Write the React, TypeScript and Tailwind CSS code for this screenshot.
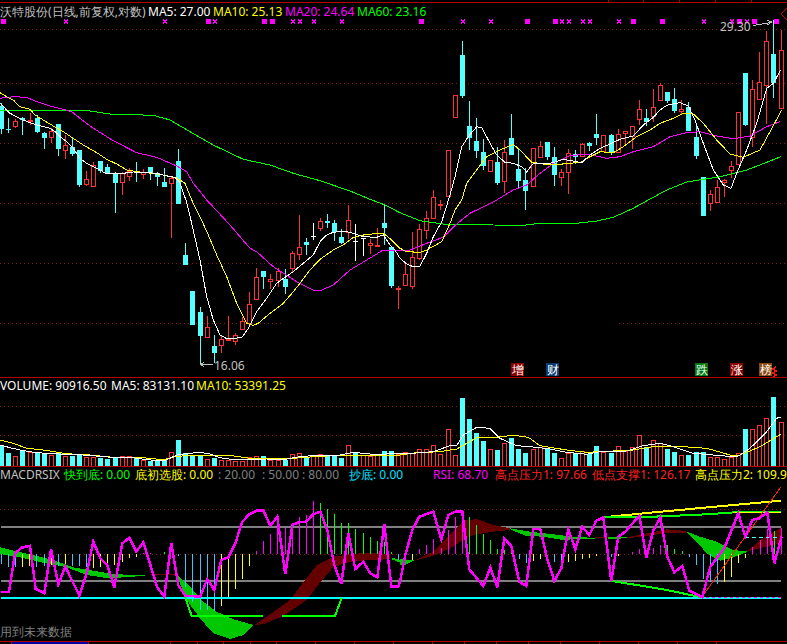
const CY = "#54ffff";
const RD = "#ff3232";
const z = (ox: number, oy: number, s: string) =>
  s
    .trim()
    .split(/\s+/)
    .map((p) => {
      const [a, b] = p.split(",").map(Number);
      return `${(ox + a / 3).toFixed(1)},${(oy + b / 3).toFixed(1)}`;
    })
    .join(" ");
const xs = (i: number) => Math.floor(1.7 + 7.085 * i);

type C = [string, number, number, number, number];
const blockA: C[] = [
  ["c", 310, 318, 386, 402], ["c", 355, 386, 388, 400], ["r", 358, 364, 380, 386], ["c", 350, 354, 360, 404],
  ["r", 340, 360, 366, 376], ["c", 345, 354, 396, 400], ["c", 395, 400, 414, 446], ["r", 385, 394, 414, 431],
  ["c", 372, 372, 446, 468], ["r", 405, 436, 452, 476], ["c", 415, 440, 462, 470], ["c", 450, 450, 555, 560],
  ["r", 514, 538, 556, 558], ["r", 486, 496, 560, 560], ["c", 483, 483, 512, 520], ["c", 492, 500, 520, 520],
  ["c", 516, 520, 548, 638], ["r", 516, 518, 550, 585], ["r", 505, 512, 530, 545], ["c", 487, 514, 518, 548],
  ["r", 506, 515, 524, 537], ["c", 500, 502, 520, 540], ["c", 517, 520, 530, 558], ["c", 505, 546, 560, 560],
  ["r", 530, 534, 551, 713], ["c", 447, 483, 612, 612],
];
const blockB: C[] = [
  ["c", 130, 165, 195, 195], ["c", 273, 273, 375, 375], ["c", 322, 336, 408, 497], ["r", 348, 382, 414, 415],
  ["c", 405, 438, 460, 490], ["r", 405, 418, 437, 458], ["r", 348, 416, 418, 418], ["r", 398, 404, 425, 435],
  ["r", 350, 364, 390, 390], ["r", 277, 313, 372, 375], ["r", 205, 232, 300, 302], ["c", 213, 213, 231, 267],
  ["r", 222, 238, 245, 267], ["r", 205, 213, 242, 262], ["c", 208, 238, 262, 282], ["r", 153, 160, 208, 220],
  ["r", 45, 142, 166, 180], ["c", 113, 126, 134, 165], ["w", 70, 108, 108, 122], ["r", 55, 64, 86, 95],
  ["c", 42, 64, 68, 85], ["c", 60, 70, 96, 122], ["c", 88, 111, 130, 132], ["r", 15, 60, 98, 118],
  ["w", 72, 124, 124, 183], ["w", 115, 115, 115, 168], ["r", 118, 130, 139, 162], ["r", 85, 136, 138, 143],
  ["c", 15, 69, 84, 135], ["c", 138, 140, 258, 263], ["r", 258, 264, 268, 327],
].map((r) => [r[0], r[1] + 600, r[2] + 600, r[3] + 600, r[4] + 600] as C);
const blockC: C[] = [
  ["r", 790, 822, 857, 857], ["r", 696, 772, 862, 867], ["r", 672, 688, 778, 780], ["r", 633, 655, 692, 718],
  ["r", 570, 590, 658, 658], ["r", 600, 612, 616, 630], ["r", 450, 450, 590, 590], ["r", 285, 285, 353, 353],
  ["c", 123, 165, 288, 295], ["c", 303, 378, 414, 450], ["c", 354, 423, 453, 473], ["c", 418, 456, 498, 510],
  ["r", 480, 481, 515, 516], ["c", 440, 486, 550, 555], ["r", 420, 456, 545, 578], ["c", 342, 414, 465, 465],
  ["c", 445, 507, 542, 565], ["c", 503, 540, 572, 630], ["r", 445, 445, 560, 560], ["r", 423, 439, 473, 474],
  ["c", 426, 426, 470, 480], ["c", 442, 471, 524, 560], ["r", 507, 516, 533, 557], ["r", 447, 460, 520, 581],
  ["c", 449, 462, 470, 490], ["r", 430, 433, 470, 473], ["c", 427, 430, 437, 453], ["c", 342, 403, 413, 435],
  ["r", 406, 406, 456, 458], ["c", 403, 405, 458, 465], ["r", 388, 403, 460, 461], ["r", 394, 394, 403, 440],
  ["r", 378, 379, 412, 446], ["r", 300, 328, 361, 376], ["c", 327, 354, 365, 378], ["r", 267, 322, 352, 366],
  ["r", 250, 256, 302, 303], ["c", 276, 276, 303, 310], ["c", 264, 297, 332, 338], ["r", 300, 328, 335, 346],
  ["c", 306, 322, 392, 392], ["c", 372, 411, 467, 476], ["c", 531, 531, 647, 647], ["r", 570, 583, 612, 633],
  ["r", 540, 561, 608, 608], ["r", 537, 541, 549, 590], ["r", 483, 499, 513, 535], ["r", 337, 337, 495, 495],
  ["c", 219, 219, 376, 378], ["r", 240, 268, 413, 440], ["r", 155, 247, 300, 300], ["r", 93, 124, 258, 372],
  ["c", 60, 162, 250, 295], ["r", 90, 151, 326, 326],
];
const candles = [...blockA, ...blockB, ...blockC];

const ma5 =
  z(0, 0, "0,310 15,325 30,340 50,350 70,360 90,368 110,375 130,380 150,385 165,395 180,410 200,425 220,445 240,475 260,490 285,503 300,510 320,522 345,521 370,520 400,516 440,518 470,520 500,528 525,532 540,548 550,580 558,600") + " " +
  z(0, 200, "575,70 600,180 620,290 640,360 660,405 680,416 700,415 725,413 745,385 770,335 800,295 830,250 855,232 880,215 910,190 940,165 960,125 980,105 1000,97 1030,93 1060,100 1090,110 1130,112 1150,105 1170,135 1185,150 1200,175") + " " +
  z(400, 200, "20,192 40,200 60,198 80,160 100,110 125,65") + " " +
  z(400, 0, "150,585 165,530 185,440 205,410 230,380 245,383 265,420 290,465 315,487 340,490 365,500 380,516 400,490 430,492 460,488 490,478 520,483 545,488 570,465 600,445 630,432 660,418 700,408 730,375 760,352 780,330 800,316 840,308 865,318 885,360 910,430 940,510 970,555 993,565 1010,520 1040,450 1070,370 1100,265 1120,250 1142,210");
const ma10 =
  z(0, 0, "0,278 20,290 40,300 60,320 90,328 105,345 130,360 160,378 190,395 220,415 250,435 290,458 320,478 350,492 380,510 410,515 440,518 470,522 500,527 530,534 555,550 575,600") + " " +
  z(0, 200, "600,50 625,105 650,165 680,230 710,310 740,370 760,376 775,370 810,340 850,310 880,275 900,250 930,210 960,178 1000,150 1030,135 1060,112 1100,103 1150,100 1175,120 1200,145") + " " +
  z(400, 200, "20,155 60,157 80,150 125,125 150,70 165,30") + " " +
  z(400, 0, "185,600 200,550 230,510 260,470 300,450 340,433 360,450 395,487 430,492 470,495 500,490 540,488 570,470 600,455 640,458 670,440 710,410 750,390 780,370 820,355 850,340 880,342 910,370 950,420 990,462 1030,472 1080,450 1110,395 1145,330");
const ma20 =
  z(0, 0, "0,295 40,290 80,292 110,305 150,318 190,328 215,335 240,355 280,385 340,422 410,458 470,472 530,498 560,515 580,550 620,600") + " " +
  z(0, 200, "690,75 750,145 770,155 820,200 890,245 940,270 965,270 1000,255 1050,210 1100,180 1150,150 1200,150") + " " +
  z(400, 200, "30,150 80,130 130,112 170,72 210,40 250,20") + " " +
  z(400, 0, "290,600 340,570 380,555 420,520 460,490 510,467 560,462 620,475 660,470 700,455 760,440 810,410 860,398 900,395 950,408 1000,416 1050,408 1100,380 1140,365");
const ma60 =
  z(0, 0, "0,330 250,330 330,342 460,346 510,360 570,395 640,435 730,478 810,495 880,520 960,542 1050,573 1115,600") + " " +
  z(0, 200, "1150,13 1200,38") + " " +
  z(400, 200, "60,62 130,72 170,72 280,75 370,76 420,70 530,70 590,63 640,52 700,25") + " " +
  z(400, 0, "745,600 800,570 860,546 960,530 1040,510 1100,487 1142,470");

const marks: [number, boolean][] = [
  [3, true], [66, false], [165, false], [208, true], [215, false], [264, true], [272, true], [293, false], [300, false], [314, false], [342, false],
  [421, true], [463, false], [491, false], [527, true], [555, true], [562, false], [569, false], [583, false], [590, false], [619, false], [633, true], [662, true], [704, false], [732, false], [739, true], [747, false], [754, true], [776, true],
];

const volTops: [string, number][] = [
  ["c", 210], ["c", 233], ["r", 243], ["c", 226], ["r", 232], ["c", 232], ["c", 235], ["r", 240], ["c", 233], ["r", 243], ["c", 243], ["c", 240], ["r", 246], ["r", 245], ["c", 250], ["c", 252], ["c", 246], ["r", 244], ["r", 244], ["c", 248], ["r", 256], ["c", 258], ["c", 254], ["c", 256], ["r", 232], ["c", 195], ["c", 235], ["c", 240], ["c", 244], ["r", 252], ["c", 250], ["r", 254], ["r", 254], ["r", 258], ["r", 258], ["r", 247], ["r", 244], ["c", 243], ["r", 254], ["r", 254], ["c", 255], ["r", 238], ["r", 235], ["c", 247], ["r", 244], ["r", 238], ["c", 243], ["c", 243], ["c", 248], ["r", 210], ["c", 232], ["r", 240], ["r", 243], ["r", 240], ["c", 228], ["c", 228], ["r", 238],
  ["r", 232], ["r", 234], ["r", 222], ["r", 222], ["r", 211], ["r", 238], ["r", 162], ["r", 240], ["c", 68], ["c", 132], ["c", 175], ["c", 198], ["r", 222], ["c", 225], ["r", 205], ["c", 188], ["c", 222], ["c", 234], ["r", 222], ["r", 215], ["c", 222], ["c", 234], ["r", 250], ["r", 234], ["c", 235], ["r", 228], ["c", 238], ["c", 213], ["r", 232], ["c", 233], ["r", 214], ["r", 228], ["r", 216], ["r", 181], ["c", 215], ["r", 196], ["r", 204], ["c", 222], ["c", 231], ["r", 240], ["c", 240], ["c", 232], ["c", 230], ["r", 246], ["r", 246], ["r", 252], ["r", 245], ["r", 235], ["c", 162], ["r", 162], ["r", 150], ["r", 130], ["c", 66], ["r", 140],
];
const volW =
  z(0, 375, "0,210 30,218 60,225 100,232 150,236 200,238 250,240 300,244 350,248 400,248 440,254 490,258 510,250 530,240 560,236 600,232 630,237 660,248 700,254 750,254 800,252 860,252 900,245 960,240 1010,242 1060,232 1120,238 1200,236") + " " +
  z(400, 375, "50,234 100,230 150,212 170,212 190,180 230,157 270,160 300,190 350,212 400,216 450,222 500,232 560,238 600,230 680,228 730,212 780,205 820,215 880,235 940,240 1010,246 1050,220 1100,170 1130,130 1142,126");
const volY =
  z(0, 375, "0,195 40,205 80,220 130,225 200,236 270,240 350,248 430,248 490,254 530,244 600,240 680,240 750,250 850,252 960,244 1050,240 1120,240 1200,240") + " " +
  z(400, 375, "50,233 120,230 170,222 230,188 290,187 340,181 385,187 420,212 500,225 560,232 640,228 700,225 760,215 850,215 920,220 990,240 1020,240 1080,215 1142,178");

const G = "#00c800";
const D = "#640000";
const ribbons: [string, number, string][] = [
  [G, 0, "0,202 40,212 100,225 160,240 220,262 280,272 340,282 400,285 450,285 380,292 320,294 260,285 200,262 130,248 60,232 0,222"],
  [D, 0, "450,281 530,281 530,285 450,285"],
  [G, 0, "530,283 570,320 610,365 650,395 700,418 760,435 760,437 730,465 690,477 640,460 600,415 560,360 530,285"],
  [D, 0, "760,437 800,410 870,360 915,300 950,255 1000,230 1060,222 1100,218 1170,222 1170,238 1100,240 1040,248 1000,262 950,320 920,360 850,408 790,432"],
  [G, 0, "1175,232 1200,240 1200,248 1175,238"],
  [G, 400, "0,238 45,240 15,255 0,255"],
  [D, 400, "40,243 100,215 150,165 190,122 230,117 280,135 330,145 330,150 280,155 220,165 190,180 150,205 100,228"],
  [G, 400, "330,145 390,155 460,163 520,170 585,174 585,176 520,178 490,180 430,170 380,168 330,148"],
  [D, 400, "585,171 625,171 625,175 585,175"],
  [G, 400, "625,172 680,172 680,175 625,177"],
  [D, 400, "680,172 740,160 800,148 850,152 860,155 860,158 800,158 740,168 680,175"],
  [G, 400, "860,155 900,170 950,185 1000,210 1045,215 1000,232 960,242 920,220 890,185 860,158"],
  [D, 400, "1040,215 1080,180 1145,142 1145,190 1080,205"],
];

const B = "#40c4ff";
const Y = "#ffff00";
const M = "#ff00ff";
const E = "#00ff00";
const hist: [number, number, number, string][] = [
  [0, 4, 253, B], [0, 25, 262, B], [0, 46, 262, B], [0, 67, 262, Y], [0, 88, 258, Y], [0, 109, 262, B], [0, 133, 258, B], [0, 154, 255, Y], [0, 175, 258, B], [0, 196, 258, Y], [0, 217, 258, B], [0, 238, 258, B], [0, 259, 260, B], [0, 280, 265, Y], [0, 301, 262, Y], [0, 322, 250, Y], [0, 343, 255, Y], [0, 367, 245, Y], [0, 388, 235, Y], [0, 409, 230, Y],
  [0, 430, 218, M], [0, 451, 218, M], [0, 493, 217, E], [0, 535, 228, B], [0, 556, 320, B], [0, 578, 365, B], [0, 601, 390, B], [0, 622, 390, B], [0, 643, 392, B], [0, 664, 378, Y], [0, 685, 355, Y], [0, 706, 327, Y], [0, 727, 297, Y], [0, 748, 258, Y],
  [0, 769, 212, M], [0, 790, 182, M], [0, 811, 162, M], [0, 832, 130, M], [0, 856, 145, M], [0, 877, 128, M], [0, 898, 110, M], [0, 919, 105, M], [0, 940, 62, M], [0, 961, 70, E], [0, 982, 87, E], [0, 1003, 102, E], [0, 1024, 128, E], [0, 1045, 130, E], [0, 1066, 148, E], [0, 1090, 160, E], [0, 1111, 170, E], [0, 1132, 182, E], [0, 1153, 187, E], [0, 1174, 215, E], [0, 1195, 240, B],
  [400, 37, 240, Y], [400, 58, 207, M], [400, 79, 195, M], [400, 100, 177, M], [400, 124, 203, M], [400, 145, 150, M], [400, 166, 112, M], [400, 187, 130, M], [400, 208, 112, E], [400, 229, 135, E], [400, 250, 162, E], [400, 271, 180, E], [400, 292, 207, E], [400, 313, 210, E], [400, 334, 218, E], [400, 358, 237, B], [400, 379, 250, B], [400, 400, 243, Y], [400, 421, 237, Y], [400, 463, 245, B], [400, 484, 250, B], [400, 505, 245, Y], [400, 526, 242, Y], [400, 547, 238, Y], [400, 568, 234, Y], [400, 589, 228, Y], [400, 634, 232, B], [400, 655, 228, Y], [400, 697, 215, M], [400, 718, 207, M], [400, 739, 210, M], [400, 760, 205, M], [400, 781, 195, M], [400, 802, 195, E], [400, 823, 207, E], [400, 847, 213, E], [400, 868, 232, B], [400, 889, 255, B], [400, 910, 297, B], [400, 931, 307, B], [400, 952, 312, B], [400, 973, 305, Y], [400, 994, 290, Y], [400, 1015, 250, Y], [400, 1036, 233, Y], [400, 1057, 202, M], [400, 1081, 180, M], [400, 1102, 148, M], [400, 1123, 153, E], [400, 1144, 145, M],
];

const rsi =
  z(0, 480, "3,336 27,336 45,220 65,203 90,197 107,327 133,340 153,208 175,313 196,260 238,346 259,285 280,185 301,235 322,255 343,322 367,190 388,173 409,215 430,187 472,322 493,350 514,190 535,315 556,347 601,350 622,297 643,330 664,240 685,232 706,190 727,125 748,103 769,92 790,91 811,137 832,110 856,283 877,135 898,126 919,125 940,103 961,95 982,150 1003,255 1024,312 1045,160 1066,267 1090,245 1111,280 1132,292 1153,133 1174,320 1195,320") + " " +
  z(400, 480, "0,305 16,225 37,150 58,110 100,95 124,178 145,105 166,95 187,95 208,268 250,318 271,262 292,322 313,175 334,198 358,305 379,318 400,147 421,147 442,238 463,303 484,265 505,148 526,208 547,140 568,165 589,122 610,112 634,303 655,170 676,155 718,107 739,232 760,152 781,112 802,230 823,277 847,258 868,332 907,352 931,260 973,205 1015,100 1036,170 1057,120 1078,115 1102,97 1123,250 1145,170");

const dots = (y: number, x1 = 0, x2 = 787) => (
  <line key={`${y}-${x1}`} x1={x1} x2={x2} y1={y + 0.5} y2={y + 0.5} stroke="#8a1a1a" strokeDasharray="1 3" />
);

const Panel = ({ top, h, children }: { top: number; h: number; children: React.ReactNode }) => (
  <svg
    className="absolute left-0 top-0"
    width={787}
    height={h}
    viewBox={`0 ${top} 787 ${h}`}
    shapeRendering="crispEdges"
  >
    {children}
  </svg>
);

const Line = ({ pts, c, w = 1 }: { pts: string; c: string; w?: number }) => (
  <polyline points={pts} fill="none" stroke={c} strokeWidth={w} />
);

const Badge = ({ t, x, cls }: { t: string; x: string; cls: string }) => (
  <div className={`absolute top-[360px] ${x} ${cls} flex h-[13px] w-[13px] items-center justify-center text-[12px] leading-none text-white`}>
    {t}
  </div>
);

export default function App() {
  return (
    <div className="relative flex h-[644px] w-[787px] flex-col overflow-hidden bg-black text-[12px] font-['Liberation_Sans','Noto_Sans_CJK_SC',sans-serif]">
      {/* top ticks */}
      <div className="relative h-[2px] shrink-0">
        <svg className="absolute inset-0" width={787} height={2} shapeRendering="crispEdges">
          {[608, 643, 679, 715, 751].map((x) => (
            <rect key={x} x={x} y={0} width={1} height={2} fill="#b40000" />
          ))}
        </svg>
      </div>

      {/* main chart */}
      <div className="relative h-[376px] shrink-0 border-y border-[#b40000]">
        <Panel top={3} h={374}>
          {[29, 83, 143, 203, 263].map((y) => dots(y))}
          {dots(323, 0, 284)}
          {dots(323, 619, 785)}
          {candles.map(([k, wt, bt, bb, wb], i) => {
            const c = xs(i);
            const col = k === "c" ? CY : k === "r" ? RD : "#ffffff";
            const top = Math.round(bt / 3);
            const bot = Math.round(bb / 3);
            return (
              <g key={i}>
                <rect x={c} y={Math.round(wt / 3)} width={1} height={Math.max(1, Math.round((wb - wt) / 3))} fill={col} />
                {k === "c" && <rect x={c - 2} y={top} width={5} height={Math.max(1, bot - top)} fill={col} />}
                {k === "r" && (
                  <rect x={c - 1.5} y={top + 0.5} width={4} height={Math.max(1, bot - top - 1)} fill="#000" stroke={col} />
                )}
                {k === "w" && <rect x={c - 2} y={top} width={5} height={1} fill={col} />}
              </g>
            );
          })}
          <Line pts={ma60} c="#00ff00" />
          <Line pts={ma20} c="#ff00ff" />
          <Line pts={ma10} c="#ffff00" />
          <Line pts={ma5} c="#ffffff" />
          {marks.map(([x, f]) => (
            <g key={x} stroke="#ff00ff">
              <path d={`M${x - 2} 19.5 L${x + 2} 23.5 M${x + 2} 19.5 L${x - 2} 23.5`} fill="none" />
              {f && <rect x={x - 2} y={19} width={5} height={5} fill="#ff00ff" stroke="none" />}
            </g>
          ))}
          <text x={720} y={31} fill="#c0c0c0">29.30</text>
          <path d="M753 25.5 L771 22.5 M767 20.5 L772 22 L767 25" fill="none" stroke="#c0c0c0" />
          <text x={214} y={370} fill="#c0c0c0">16.06</text>
          <path d="M213 364.5 L201 364.5 M204 362 L201 364.5 L204 367" fill="none" stroke="#c0c0c0" />
          <path d="M787 8 L781 14 L787 20" fill="none" stroke="#d00000" />
          <path d="M776 367 L773 369 L776 371 L773 373 L776 375 L773 377" fill="none" stroke="#ff1010" strokeWidth={1.5} />
        </Panel>
        <div className="relative flex h-[18px] items-center whitespace-nowrap">
          <span className="w-[148px] shrink-0 text-[#c0c0c0]">沃特股份(日线,前复权,对数)</span>
          <span className="w-[65px] shrink-0 text-white">MA5: 27.00</span>
          <span className="w-[72px] shrink-0 text-[#ffff00]">MA10: 25.13</span>
          <span className="w-[72px] shrink-0 text-[#ff00ff]">MA20: 24.64</span>
          <span className="shrink-0 text-[#00ff00]">MA60: 23.16</span>
        </div>
        <Badge t="增" x="left-[511px]" cls="bg-[#8a0000]" />
        <Badge t="财" x="left-[546px]" cls="bg-[#0a3a6e]" />
        <Badge t="跌" x="left-[695px]" cls="bg-[#007a10]" />
        <Badge t="涨" x="left-[730px]" cls="bg-[#8a0000]" />
        <Badge t="榜" x="left-[759px]" cls="bg-[#8a4a10]" />
      </div>

      {/* volume */}
      <div className="relative h-[89px] shrink-0 border-b border-[#b40000]">
        <Panel top={378} h={88}>
          {dots(406)}
          {dots(435)}
          {volTops.map(([k, t], i) => {
            const c = xs(i);
            const y = Math.round(375 + t / 3);
            return k === "c" ? (
              <rect key={i} x={c - 2} y={y} width={5} height={466 - y} fill={CY} />
            ) : (
              <rect key={i} x={c - 1.5} y={y + 0.5} width={4} height={465.5 - y} fill="#000" stroke={RD} />
            );
          })}
          <Line pts={volY} c="#ffff00" />
          <Line pts={volW} c="#ffffff" />
        </Panel>
        <div className="relative flex h-[16px] items-center whitespace-nowrap">
          <span className="w-[111px] shrink-0 text-white">VOLUME: 90916.50</span>
          <span className="w-[85px] shrink-0 text-white">MA5: 83131.10</span>
          <span className="shrink-0 text-[#ffff00]">MA10: 53391.25</span>
        </div>
      </div>

      {/* macd */}
      <div className="relative h-[175px] shrink-0 border-b border-[#b40000]">
        <Panel top={467} h={174}>
          {dots(509)}
          {dots(554)}
          <rect x={1} y={526} width={780} height={2} fill="#808080" />
          <rect x={1} y={580} width={780} height={2} fill="#808080" />
          {ribbons.map(([c, ox, p], i) => (
            <polygon key={i} points={z(ox, 480, p)} fill={c} />
          ))}
          {hist.map(([ox, x, y, c], i) => {
            const yy = Math.round(480 + y / 3);
            const base = 554;
            const px = Math.floor(ox + x / 3);
            return <rect key={i} x={px} y={Math.min(yy, base)} width={1} height={Math.abs(base - yy) || 1} fill={c} />;
          })}
          <rect x={1} y={597} width={780} height={2} fill="#00ffff" />
          <Line pts={z(0, 480, "555,350 575,408 790,408")} c="#00ff00" w={2} />
          <Line pts={z(0, 480, "845,408 1005,408 1025,354")} c="#00ff00" w={2} />
          <Line pts={z(400, 480, "610,112 750,98 1000,75 1142,62")} c="#ffff00" w={2} />
          <Line pts={z(400, 480, "610,112 760,110 920,103 1005,97 1142,95")} c="#00ff00" w={2} />
          <Line pts={z(400, 480, "1000,97 1142,97")} c="#ffff00" />
          <Line pts={z(400, 480, "635,303 790,328 905,352")} c="#00ff00" w={2} />
          <Line pts={z(400, 480, "905,352 1142,22")} c="#ff2000" />
          <line x1={745} x2={783} y1={537.5} y2={537.5} stroke="#54ffff" strokeDasharray="4 3" />
          <line x1={700} x2={783} y1={597.5} y2={597.5} stroke="#ff00ff" strokeDasharray="3 3" />
          <Line pts={rsi} c="#ff00ff" w={2.5} />
        </Panel>
        <div className="relative flex h-[16px] items-center whitespace-nowrap">
          <span className="w-[64px] shrink-0 text-[#c0c0c0]">MACDRSIX</span>
          <span className="w-[71px] shrink-0 text-[#00ff00]">快到底: 0.00</span>
          <span className="w-[83px] shrink-0 text-[#ffff00]">底初选股: 0.00</span>
          <span className="w-[44px] shrink-0 text-[#808080]">: 20.00</span>
          <span className="w-[40px] shrink-0 text-[#808080]">: 50.00</span>
          <span className="w-[47px] shrink-0 text-[#808080]">: 80.00</span>
          <span className="w-[84px] shrink-0 text-[#00e0ff]">抄底: 0.00</span>
          <span className="w-[62px] shrink-0 text-[#ff00ff]">RSI: 68.70</span>
          <span className="w-[97px] shrink-0 text-[#ff2020]">高点压力1: 97.66</span>
          <span className="w-[103px] shrink-0 text-[#ff2020]">低点支撑1: 126.17</span>
          <span className="shrink-0 text-[#ffff00]">高点压力2: 109.9</span>
        </div>
        <div className="absolute bottom-0 left-0 text-[#808080]">用到未来数据</div>
      </div>

      {/* time axis */}
      <div className="relative h-[3px] shrink-0">
        <svg className="absolute inset-0" width={787} height={3} shapeRendering="crispEdges">
          <rect x={11} y={0} width={77} height={3} fill="#0000a0" />
          {[11, 88, 170, 197, 223, 250, 276, 315, 354, 393, 432, 464, 496, 528, 560, 599, 638, 677, 716].map((x) => (
            <rect key={x} x={x} y={0} width={1} height={3} fill="#b40000" />
          ))}
        </svg>
      </div>
    </div>
  );
}
